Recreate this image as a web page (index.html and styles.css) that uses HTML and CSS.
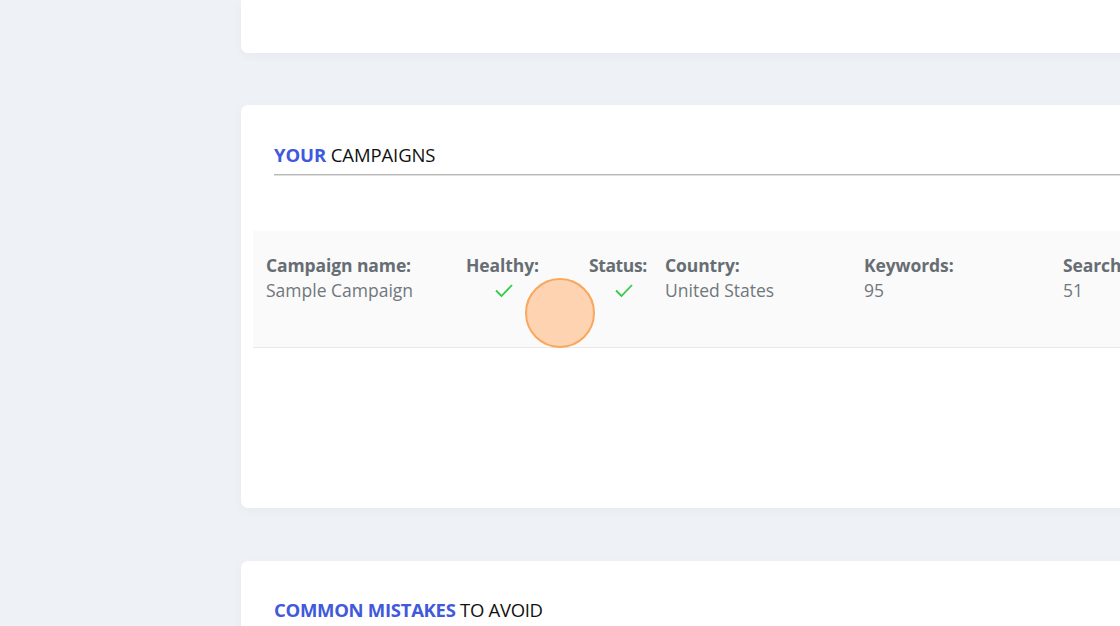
FILE: index.html
```html
<!DOCTYPE html>
<html>
<head>
    <meta name="viewport" content="width=device-width, initial-scale=1.0">
    <title>Campaigns</title>
    <link rel="stylesheet" href="styles.css">
</head>
<body>
    <div class="page">
        <!-- card above, scrolled mostly out of view -->
        <div class="card card-top"></div>

        <div class="card card-campaigns">
            <h2 class="section-title"><span class="accent">YOUR</span> CAMPAIGNS</h2>

            <div class="campaign-row">
                <div class="cell">
                    <div class="label">Campaign name:</div>
                    <div class="value">Sample Campaign</div>
                </div>
                <div class="cell center">
                    <div class="label">Healthy:</div>
                    <div class="value">
                        <svg class="check" width="20" height="16" viewBox="0 0 20 16"><path d="M2 8.5 L7.5 14 L18 3" fill="none" stroke="#2fcc47" stroke-width="1.8"/></svg>
                    </div>
                </div>
                <div class="cell center status">
                    <div class="label">Status:</div>
                    <div class="value">
                        <svg class="check" width="20" height="16" viewBox="0 0 20 16"><path d="M2 8.5 L7.5 14 L18 3" fill="none" stroke="#2fcc47" stroke-width="1.8"/></svg>
                    </div>
                </div>
                <div class="cell">
                    <div class="label">Country:</div>
                    <div class="value">United States</div>
                </div>
                <div class="cell">
                    <div class="label">Keywords:</div>
                    <div class="value">95</div>
                </div>
                <div class="cell">
                    <div class="label">Searches:</div>
                    <div class="value">51</div>
                </div>
            </div>

            <!-- click marker from the recording -->
            <div class="click-dot"></div>
        </div>

        <div class="card card-mistakes">
            <h2 class="section-title"><span class="accent">COMMON MISTAKES</span> TO AVOID</h2>
        </div>
    </div>
</body>
</html>
```

FILE: styles.css
```css
* {
    margin: 0;
    padding: 0;
    box-sizing: border-box;
}
body {
    background-color: #eef1f5;
    font-family: "Open Sans", Arial, sans-serif;
    overflow: hidden;
    height: 626px;
}
.page {
    padding-left: 241px;
    display: flex;
    flex-direction: column;
    gap: 52px;
    width: 1400px;
}
.card {
    background-color: #fff;
    border-radius: 7px;
    box-shadow: 0 3px 10px rgba(40, 60, 90, 0.04);
    width: 1000px;
}
.card-top {
    height: 53px;
    border-radius: 0 0 7px 7px;
}
.card-campaigns {
    position: relative;
    height: 403px;
    padding: 38px 12px 0 12px;
}
.card-mistakes {
    height: 120px;
    margin-top: 1px;
    padding: 37px 12px 0 12px;
}
.section-title {
    margin: 0 0 0 21px;
    font-size: 18.5px;
    font-weight: 400;
    color: #111;
    line-height: 24px;
    letter-spacing: -0.1px;
}
.card-mistakes .section-title {
    letter-spacing: -0.3px;
}
.card-campaigns .section-title {
    padding-bottom: 7px;
    border-bottom: 1px solid #b8b8b8;
    box-shadow: 0 1px 0 #e0e0e0;
}
.accent {
    color: #4159db;
    font-weight: 700;
}
.campaign-row {
    margin-top: 56px;
    height: 117px;
    background-color: #fafafa;
    border-bottom: 1px solid #eaeaea;
    padding: 22px 0 0 13px;
    display: grid;
    grid-template-columns: 200px 123px 76px 199px 199px 199px;
}
.cell {
    justify-self: start;
}
.cell.center {
    text-align: center;
}
.label {
    font-size: 17.5px;
    font-weight: 700;
    color: #666d73;
    line-height: 25px;
    letter-spacing: -0.1px;
}
.status .label {
    letter-spacing: -0.4px;
}
.value {
    font-size: 17.5px;
    color: #70777d;
    line-height: 25px;
    letter-spacing: 0;
}
.check {
    margin-top: 4px;
    margin-left: 4px;
}
.status .check {
    margin-left: 12px;
}
.click-dot {
    position: absolute;
    left: 284px;
    top: 173px;
    width: 70px;
    height: 70px;
    border-radius: 50%;
    background-color: #fed3b2;
    border: 2px solid #f9a65e;
}
```
